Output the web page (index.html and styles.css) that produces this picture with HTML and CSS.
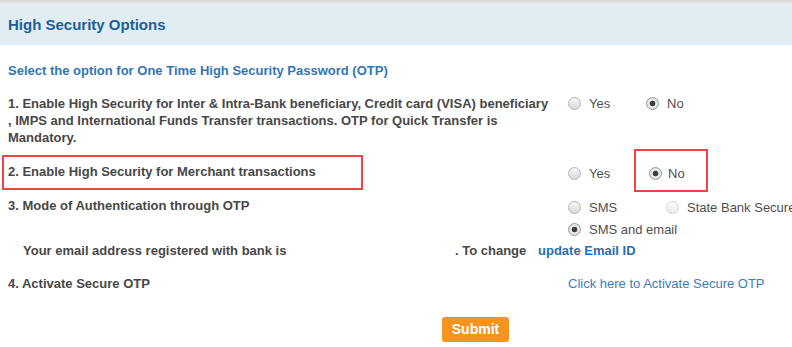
FILE: index.html
```html
<!DOCTYPE html>
<html>
<head>
<meta charset="utf-8">
<link rel="stylesheet" href="styles.css">
</head>
<body>
<div class="topline"></div>
<div class="header"><h1 class="title">High Security Options</h1></div>
<div class="content">
  <p class="intro">Select the option for One Time High Security Password (OTP)</p>

  <div class="row row1">
    <div class="label">1. Enable High Security for Inter &amp; Intra-Bank beneficiary, Credit card (VISA) beneficiary , IMPS and International Funds Transfer transactions. OTP for Quick Transfer is Mandatory.</div>
    <div class="opts">
      <div class="optline">
        <span class="opt w-yes"><span class="radio"></span>Yes</span>
        <span class="opt"><span class="radio checked"></span>No</span>
      </div>
    </div>
  </div>

  <div class="row row2">
    <div class="label">2. Enable High Security for Merchant transactions</div>
    <div class="opts">
      <div class="optline low">
        <span class="opt w-yes"><span class="radio"></span>Yes</span>
        <span class="opt no2"><span class="radio checked"></span>No</span>
      </div>
    </div>
  </div>

  <div class="row row3">
    <div class="label">3. Mode of Authentication through OTP</div>
    <div class="opts clip">
      <div class="optline tall">
        <span class="opt w-sms"><span class="radio"></span>SMS</span>
        <span class="opt"><span class="radio disabled"></span>State Bank Secure OTP App</span>
      </div>
      <div class="optline tall">
        <span class="opt"><span class="radio checked"></span>SMS and email</span>
      </div>
    </div>
  </div>

  <div class="email-row">
    <span class="email-label">Your email address registered with bank is</span>
    <span class="email-change">. To change</span>
    <a class="link-bold" href="#">update Email ID</a>
  </div>

  <div class="row row4">
    <div class="label">4. Activate Secure OTP</div>
    <div class="opts">
      <a class="link" href="#">Click here to Activate Secure OTP</a>
    </div>
  </div>

  <div class="actions">
    <button class="submit" type="button">Submit</button>
  </div>
</div>

<div class="mark mark-row"></div>
<div class="mark mark-no"></div>
</body>
</html>
```

FILE: styles.css
```css
html, body {
  margin: 0;
  padding: 0;
  background: #ffffff;
  width: 792px;
  height: 347px;
  overflow: hidden;
  font-family: "Liberation Sans", Arial, sans-serif;
  color: #474747;
}

.topline {
  height: 5px;
  background: linear-gradient(#d6d6d6, #efefef);
}

.header {
  height: 40px;
  background: #e1edf2;
  padding-left: 8px;
}

.title {
  margin: 0;
  font-size: 15px;
  line-height: 40px;
  font-weight: bold;
  color: #1d5e9c;
}

.content {
  padding-left: 8px;
}

.intro {
  margin: 18px 0 0 0;
  font-size: 13px;
  line-height: 16px;
  font-weight: bold;
  color: #3276b6;
}

.row {
  display: grid;
  grid-template-columns: 560px 1fr;
}

.label {
  font-size: 13px;
  line-height: 17px;
  font-weight: bold;
  color: #474747;
}

.row1 { margin-top: 15.5px; }
.row1 .label { width: 544px; }
.row2 { margin-top: 17px; }
.row3 { margin-top: 13px; }
.row4 { margin-top: 16px; }

.opts {
  font-size: 13px;
  color: #505050;
  white-space: nowrap;
  min-width: 0;
}

.opts.clip {
  overflow: hidden;
}

.optline {
  display: flex;
  align-items: center;
  height: 17px;
}

.optline.low { height: 21px; }
.optline.tall { height: 22px; }

.opt {
  display: inline-flex;
  align-items: center;
  flex: none;
}

.w-yes { width: 78px; }
.w-sms { width: 98px; }
.no2 { margin-left: 3px; }
.no2 .radio { margin-right: 6px; }

.radio {
  box-sizing: border-box;
  width: 13px;
  height: 13px;
  border-radius: 50%;
  border: 1px solid #b3b3b3;
  background: linear-gradient(#f6f6f6, #d9d9d9);
  margin-right: 8px;
  flex: none;
}

.radio.checked {
  border-color: #9a9a9a;
  background: radial-gradient(circle, #3e3e3e 0, #3e3e3e 2.5px, #ececec 3.2px, #d6d6d6 100%);
}

.radio.disabled {
  border-color: #d3d3d3;
  background: linear-gradient(#fbfbfb, #ebebeb);
}

.email-row {
  display: flex;
  margin-top: 1px;
  font-size: 13px;
  line-height: 17px;
  font-weight: bold;
  color: #474747;
}

.email-label {
  width: 432px;
  padding-left: 15px;
}

.email-change {
  width: 83px;
}

.link-bold {
  color: #2a6db0;
  text-decoration: none;
}

.link {
  font-size: 13px;
  line-height: 17px;
  color: #3a7cc0;
  text-decoration: none;
}

.actions {
  margin-top: 25px;
  padding-left: 434px;
}

.submit {
  width: 67px;
  height: 25px;
  border: none;
  border-radius: 3px;
  background: #f7941d;
  color: #ffffff;
  font-family: "Liberation Sans", Arial, sans-serif;
  font-size: 14px;
  font-weight: bold;
  padding: 0;
}

.mark {
  position: absolute;
  box-sizing: border-box;
  border: 2px solid #ef4444;
}

.mark-row {
  left: 2px;
  top: 155px;
  width: 361px;
  height: 35px;
}

.mark-no {
  left: 634px;
  top: 149px;
  width: 74px;
  height: 43px;
}
```
